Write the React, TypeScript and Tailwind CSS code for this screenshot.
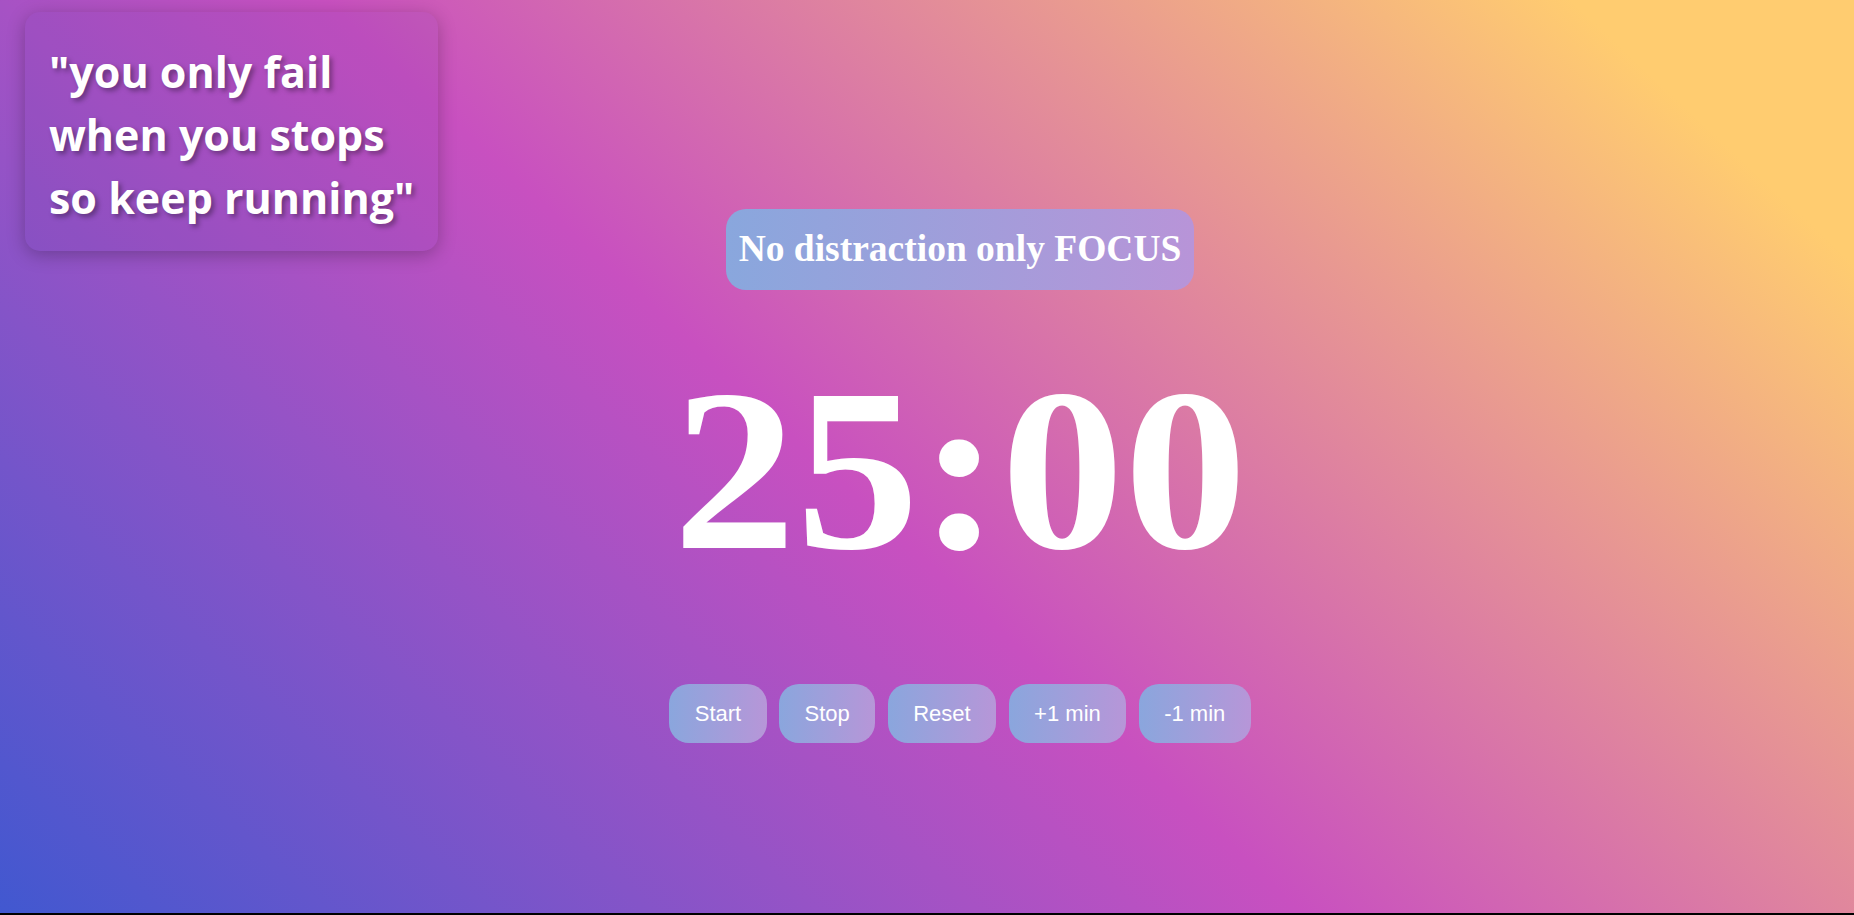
import React from "react";

const buttons = ["Start", "Stop", "Reset", "+1 min", "-1 min"];

function QuoteCard() {
  return (
    <div className="col-start-1 row-start-1 self-start justify-self-start ml-[25px] mt-[12px] w-[413px] h-[239px] rounded-[15px] bg-[#5a3aa8]/10 shadow-[0_4px_18px_rgba(0,0,0,0.25)] pl-[24px] pt-[28px]">
      <p className="font-['Open_Sans',sans-serif] font-bold text-white text-[43px] leading-[63px] [text-shadow:3px_3px_5px_rgba(0,0,0,0.35)]">
        "you only fail
        <br />
        when you stops
        <br />
        so keep running"
      </p>
    </div>
  );
}

function Timer() {
  return (
    <div className="col-start-1 row-start-1 flex flex-col items-center pl-[66px] pt-[209px]">
      <h1 className="h-[81px] flex items-center px-[13px] rounded-[20px] bg-[linear-gradient(90deg,#89a7dd,#b894d8)] font-['Liberation_Serif',serif] font-bold text-white text-[37.5px]">
        No distraction only FOCUS
      </h1>
      <div className="mt-[55px] h-[250px] leading-[250px] font-['Liberation_Serif',serif] font-bold text-white text-[246px] scale-y-[0.94]">
        25:00
      </div>
      <div className="mt-[89px] flex gap-[12.4px]">
        {buttons.map((b) => (
          <button
            key={b}
            className="h-[59px] px-[25.5px] rounded-[20px] bg-[linear-gradient(90deg,#8aa6dd,#b796d8)] font-['Liberation_Sans',sans-serif] text-[22px] text-white"
          >
            {b}
          </button>
        ))}
      </div>
    </div>
  );
}

export default function App() {
  return (
    <div className="h-screen w-full bg-black overflow-hidden">
      <div className="grid h-[913px] w-full bg-[linear-gradient(43deg,#4158D0_0%,#C850C0_46%,#FFCC70_90%)]">
        <Timer />
        <QuoteCard />
      </div>
    </div>
  );
}
